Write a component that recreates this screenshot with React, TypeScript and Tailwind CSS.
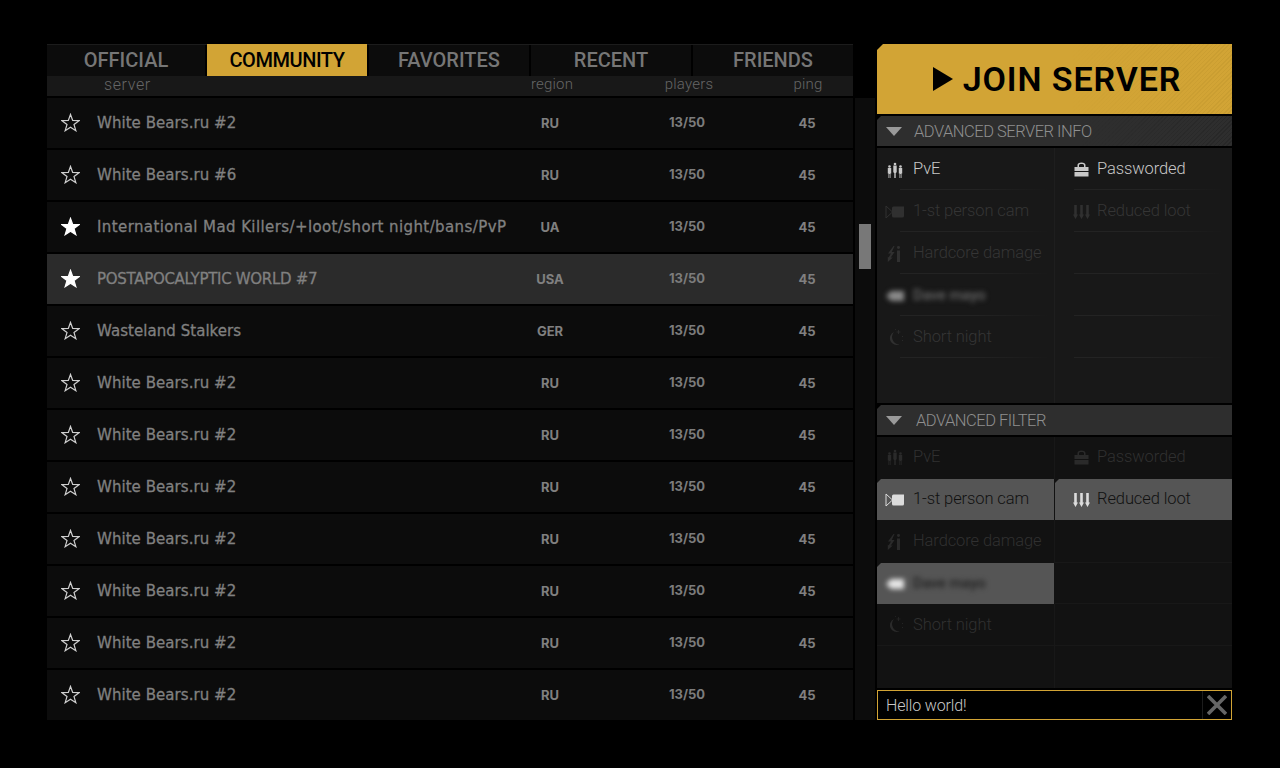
const tabs = ['OFFICIAL', 'COMMUNITY', 'FAVORITES', 'RECENT', 'FRIENDS'];

const servers = [
  { name: 'White Bears.ru #2', region: 'RU', track: 'tracking-[0.05px]' },
  { name: 'White Bears.ru #6', region: 'RU', track: 'tracking-[0.05px]' },
  { name: 'International Mad Killers/+loot/short night/bans/PvP', region: 'UA', fav: true, track: 'tracking-[0.4px]' },
  { name: 'POSTAPOCALYPTIC WORLD #7', region: 'USA', fav: true, selected: true, track: 'tracking-[-0.3px]' },
  { name: 'Wasteland Stalkers', region: 'GER', track: 'tracking-[0.05px]' },
  { name: 'White Bears.ru #2', region: 'RU', track: 'tracking-[0.05px]' },
  { name: 'White Bears.ru #2', region: 'RU', track: 'tracking-[0.05px]' },
  { name: 'White Bears.ru #2', region: 'RU', track: 'tracking-[0.05px]' },
  { name: 'White Bears.ru #2', region: 'RU', track: 'tracking-[0.05px]' },
  { name: 'White Bears.ru #2', region: 'RU', track: 'tracking-[0.05px]' },
  { name: 'White Bears.ru #2', region: 'RU', track: 'tracking-[0.05px]' },
  { name: 'White Bears.ru #2', region: 'RU', track: 'tracking-[0.05px]' },
];

const STAR = '10,1.5 12.3,7.8 19,8.100 13.700,12.200 15.600,18.600 10,14.900 4.400,18.600 6.300,12.200 1,8.100 7.700,7.800';

function Star({ filled }: { filled?: boolean }) {
  return (
    <svg width="19" height="19" viewBox="0 0 20 20" className="text-[#cfcfcf]">
      <polygon
        points={STAR}
        fill={filled ? '#ffffff' : 'none'}
        stroke={filled ? '#ffffff' : 'currentColor'}
        strokeWidth="1.3"
      />
    </svg>
  );
}

function PeopleIcon() {
  return (
    <svg width="16" height="16" viewBox="0 0 16 16" fill="currentColor">
      <circle cx="2.500" cy="4.500" r="1.300" />
      <path d="M.8 6h3.400v5.500h-.7V16h-.7v-4h-.6v4H1.500v-4.500H.8z" />
      <circle cx="8" cy="2" r="1.300" />
      <path d="M6.300 3.500h3.400v7h-.7V16h-.7v-5h-.6v5H7v-5.500h-.7z" />
      <circle cx="13.500" cy="4.500" r="1.300" />
      <path d="M11.800 6h3.400v5.500h-.7V16h-.7v-4h-.6v4h-.7v-4.500h-.7z" />
    </svg>
  );
}

function LockIcon() {
  return (
    <svg width="15" height="15" viewBox="0 0 15 15" fill="currentColor">
      <path d="M3.500 5V3C3.500 1.500 5 .5 7.500 .5S11.500 1.500 11.500 3v2H10V3.200C10 2.400 9 2 7.500 2S5 2.400 5 3.200V5z" />
      <rect x="0.500" y="5" width="14" height="4" />
      <rect x="0.500" y="10" width="14" height="4.500" />
    </svg>
  );
}

function CamIcon() {
  return (
    <svg width="20" height="14" viewBox="0 0 20 14" fill="currentColor">
      <path d="M1 1l6.500 6L1 13z" fill="none" stroke="currentColor" strokeWidth="1" />
      <path d="M7 3Q7 1.500 8.500 1.500H19v9.500Q19 12.500 17.500 12.500H8.500Q7 12.500 7 11z" />
    </svg>
  );
}

function LootIcon() {
  return (
    <svg width="17" height="14" viewBox="0 0 17 14" fill="currentColor">
      <path d="M1.200 0h2.600v9.500H5L2.500 14 0 9.500h1.200z" />
      <path d="M7.200 0h2.600v9.500H11L8.500 14 6 9.500h1.200z" />
      <path d="M13.200 0h2.600v9.500H17L14.500 14 12 9.500h1.200z" />
    </svg>
  );
}

function DamageIcon() {
  return (
    <svg width="16" height="16" viewBox="0 0 16 16" fill="currentColor">
      <path d="M6.500 0L1 7.500h3L1.500 11.500.8 10.500V16l5-4.500H3.800L7.500 6H4.800L7.500 0z" />
      <rect x="10" y="0" width="3" height="3" rx="1.400" />
      <rect x="10" y="4.500" width="3" height="11.500" />
    </svg>
  );
}

function DayIcon() {
  return (
    <svg width="20" height="12" viewBox="0 0 20 12" fill="currentColor">
      <path d="M1 6l5-5h13v10H6z" />
    </svg>
  );
}

function MoonIcon() {
  return (
    <svg width="18" height="18" viewBox="0 0 18 18" fill="none" stroke="currentColor">
      <path d="M8 3A6.500 6.500 0 0 0 13.500 15.500A7.500 7.500 0 0 1 8 3z" fill="currentColor" stroke="none" />
      <path d="M12.500 1v4M10.500 3h4" strokeWidth="0.7" />
      <path d="M16.500 7v1M16.500 11v1M9 .5h.8" strokeWidth="0.8" />
    </svg>
  );
}

const options = [
  { label: '1-st person cam', icon: <CamIcon /> },
  { label: 'Hardcore damage', icon: <DamageIcon /> },
  { label: 'Dave mayo', icon: <DayIcon />, blurred: true },
  { label: 'Short night', icon: <MoonIcon /> },
];

function OptionCell({
  label,
  icon,
  textClass,
  iconClass,
  blurred,
  second,
}: {
  label: string;
  icon: React.ReactNode;
  textClass: string;
  iconClass: string;
  blurred?: boolean;
  second?: boolean;
}) {
  return (
    <div className={`flex h-full items-center ${blurred ? 'blur-[2.5px]' : ''} ${second ? 'pl-[6px]' : ''}`}>
      <span className={`flex w-[36px] justify-center ${second ? 'pl-[4px]' : ''} ${iconClass}`}>{icon}</span>
      <span className={`tracking-[-0.1px] ${blurred ? 'text-[15px] font-medium' : 'text-[16.5px] font-light'} ${textClass}`}>
        {label}
      </span>
    </div>
  );
}

function FadeLine({ className }: { className: string }) {
  return <div className={`h-px bg-gradient-to-r from-[#232323] via-[#232323] to-transparent ${className}`} />;
}

function SectionHeader({ title, hatched, indent }: { title: string; hatched?: boolean; indent: string }) {
  return (
    <div className="relative flex h-[30px] items-center bg-[#2e2e2e] [clip-path:polygon(4px_0,100%_0,100%_100%,0_100%,0_4px)]">
      {hatched && (
        <div className="absolute inset-y-0 right-0 w-[150px] bg-[repeating-linear-gradient(135deg,#282828_0,#282828_1px,transparent_1px,transparent_3px)] [mask-image:linear-gradient(to_right,transparent,black)]" />
      )}
      <svg width="16" height="9" viewBox="0 0 16 9" className="ml-[9px] text-[#9a9a9a]" fill="currentColor">
        <path d="M0 0h16L8 9z" />
      </svg>
      <span className={`relative pt-[3px] text-[16.5px] font-light tracking-[-0.5px] text-[#8f8f8f] ${indent}`}>{title}</span>
    </div>
  );
}

export default function App() {
  return (
    <div className="flex h-screen w-screen gap-[2px] overflow-hidden bg-black pl-[47px] pt-[44px] font-['Roboto',sans-serif]">
      <div className="flex w-[806px] flex-col">
        <div className="grid h-[30px] grid-cols-[158px_160px_160px_160px_160px] gap-[2px] border-t border-[#1c1c1c]">
          {tabs.map((t) => (
            <div
              key={t}
              className={
                t === 'COMMUNITY'
                  ? 'flex -mt-px items-center justify-center bg-[#d2a435] pb-[2px] text-[20px] font-medium tracking-[-0.45px] text-black'
                  : 'flex items-center justify-center border-b border-[#1c1c1c] bg-[#0c0c0c] pb-[2px] text-[20px] font-medium text-[#767676]'
              }
            >
              {t}
            </div>
          ))}
        </div>
        <div className="mt-[2px] grid h-[20px] grid-cols-[57px_408px_80px_194px_44px] items-start bg-[#181818] text-[15px] font-light leading-[17px] tracking-[0.2px] text-[#666666]">
          <span className="col-start-2 text-[16px] tracking-[0.6px]">server</span>
          <span className="text-center">region</span>
          <span className="text-center">players</span>
          <span className="text-center">ping</span>
        </div>
        <div className="mt-[2px] flex flex-col gap-[2px]">
          {servers.map((s, i) => (
            <div
              key={i}
              className={`grid h-[50px] grid-cols-[50px_413px_80px_194px_46px] items-center ${
                s.selected ? 'bg-[#2b2b2b]' : 'bg-[#0c0c0c]'
              }`}
            >
              <span className="flex justify-center pb-[1px] pr-[3px]">
                <Star filled={s.fav} />
              </span>
              <span className={`whitespace-nowrap text-[15px] font-medium text-[#808080] [-webkit-text-stroke:0.3px_#808080] font-['DejaVu_Sans',sans-serif] ${s.track}`}>
                {s.name}
              </span>
              <span className="pt-[1px] text-center text-[13px] font-bold text-[#808080] font-['Inter',sans-serif]">
                {s.region}
              </span>
              <span className="text-center text-[13px] font-bold text-[#7c7c7c] font-['Inter',sans-serif]">13/50</span>
              <span className="pt-[1px] text-center text-[13px] font-bold text-[#808080] font-['Inter',sans-serif]">45</span>
            </div>
          ))}
        </div>
      </div>

      <div className="mt-[54px] h-[622px] w-[20px] bg-[#0c0c0c] pl-[4px] pt-[126px]">
        <div className="h-[45px] w-[12px] bg-[#787878]" />
      </div>

      <div className="flex w-[355px] flex-col gap-[2px]">
        <div className="relative flex h-[70px] items-center justify-center gap-[10px] bg-[#d2a435] pl-[5px] [clip-path:polygon(6px_0,100%_0,100%_100%,0_100%,0_6px)]">
          <div className="absolute inset-y-0 right-0 w-[160px] bg-[repeating-linear-gradient(135deg,#c99d31_0,#c99d31_1px,transparent_1px,transparent_3px)] [mask-image:linear-gradient(to_right,transparent,black)]" />
          <svg width="20" height="24" viewBox="0 0 20 24" className="relative text-black" fill="currentColor">
            <path d="M0 0l20 12L0 24z" />
          </svg>
          <span className="relative text-[34px] font-semibold tracking-[0.9px] text-black">JOIN SERVER</span>
        </div>

        <SectionHeader title="ADVANCED SERVER INFO" hatched indent="ml-[12px]" />
        <div className="grid h-[255px] grid-cols-[178px_1fr] grid-rows-[41px_1px_41px_1px_41px_1px_41px_1px_41px_1px_1fr] bg-[#181818]">
          <div className="border-r border-[#1e1e1e] pt-[2px]">
            <OptionCell label="PvE" icon={<PeopleIcon />} textClass="text-[#c8c8c8]" iconClass="text-[#c8c8c8]" />
          </div>
          <div className="pt-[2px]">
            <OptionCell second label="Passworded" icon={<LockIcon />} textClass="text-[#c8c8c8]" iconClass="text-[#c8c8c8]" />
          </div>
          <div className="border-r border-[#1e1e1e]">
            <FadeLine className="ml-[23px] w-[150px]" />
          </div>
          <FadeLine className="ml-[19px] w-[150px]" />
          {options.map((o, i) => (
            <div key={o.label} className="contents">
              <div className="border-r border-[#1e1e1e] pt-[2px]">
                <OptionCell
                  label={o.label}
                  icon={o.icon}
                  blurred={o.blurred}
                  textClass={o.blurred ? 'text-[#666666]' : 'text-[#353535]'}
                  iconClass={o.blurred ? 'text-[#8a8a8a]' : 'text-[#303030]'}
                />
              </div>
              <div className="pt-[2px]">
                {i === 0 && (
                  <OptionCell second label="Reduced loot" icon={<LootIcon />} textClass="text-[#353535]" iconClass="text-[#303030]" />
                )}
              </div>
              <div className="border-r border-[#1e1e1e]">
                <FadeLine className="ml-[23px] w-[150px]" />
              </div>
              <FadeLine className="ml-[19px] w-[150px]" />
            </div>
          ))}
          <div className="border-r border-[#1e1e1e]" />
          <div />
        </div>

        <SectionHeader title="ADVANCED FILTER" indent="ml-[14px]" />
        <div className="grid h-[251px] grid-cols-[178px_1fr] grid-rows-[42px_41px_43px_41px_42px_1fr] bg-[#121212]">
          <div className="border-r border-[#181818] pb-[2px]">
            <OptionCell label="PvE" icon={<PeopleIcon />} textClass="text-[#303030]" iconClass="text-[#2a2a2a]" />
          </div>
          <div className="pb-[2px]">
            <OptionCell second label="Passworded" icon={<LockIcon />} textClass="text-[#303030]" iconClass="text-[#2a2a2a]" />
          </div>

          <div className="mr-px bg-[#555555] [clip-path:polygon(4px_0,100%_0,100%_100%,0_100%,0_4px)]">
            <OptionCell label="1-st person cam" icon={<CamIcon />} textClass="text-[#111111]" iconClass="text-[#dcdcdc]" />
          </div>
          <div className="bg-[#555555] [clip-path:polygon(4px_0,100%_0,100%_100%,0_100%,0_4px)]">
            <OptionCell second label="Reduced loot" icon={<LootIcon />} textClass="text-[#111111]" iconClass="text-[#dcdcdc]" />
          </div>

          <div className="border-r border-[#181818]">
            <OptionCell label="Hardcore damage" icon={<DamageIcon />} textClass="text-[#303030]" iconClass="text-[#2a2a2a]" />
          </div>
          <div className="border-b border-[#181818]" />

          <div className="mr-px bg-[#555555] [clip-path:polygon(4px_0,100%_0,100%_100%,0_100%,0_4px)]">
            <OptionCell label="Dave mayo" icon={<DayIcon />} blurred textClass="text-[#222222]" iconClass="text-[#e6e6e6]" />
          </div>
          <div className="border-b border-[#181818]" />

          <div className="border-b border-r border-[#181818] pt-[1px]">
            <OptionCell label="Short night" icon={<MoonIcon />} textClass="text-[#303030]" iconClass="text-[#2a2a2a]" />
          </div>
          <div className="border-b border-[#181818]" />

          <div className="border-r border-[#181818]" />
          <div />
        </div>

        <div className="flex h-[30px] items-center border border-[#d2a435] bg-black">
          <span className="flex-1 pl-[8px] pt-[1px] text-[16px] font-light tracking-[-0.15px] text-[#c8c8c8]">Hello world!</span>
          <span className="flex h-full w-[29px] items-center justify-center border-l border-[#1c1c1c]">
            <svg width="20" height="20" viewBox="0 0 20 20" className="text-[#666666]" stroke="currentColor" strokeWidth="3.6">
              <path d="M1 1l18 18M19 1L1 19" />
            </svg>
          </span>
        </div>
      </div>
    </div>
  );
}
